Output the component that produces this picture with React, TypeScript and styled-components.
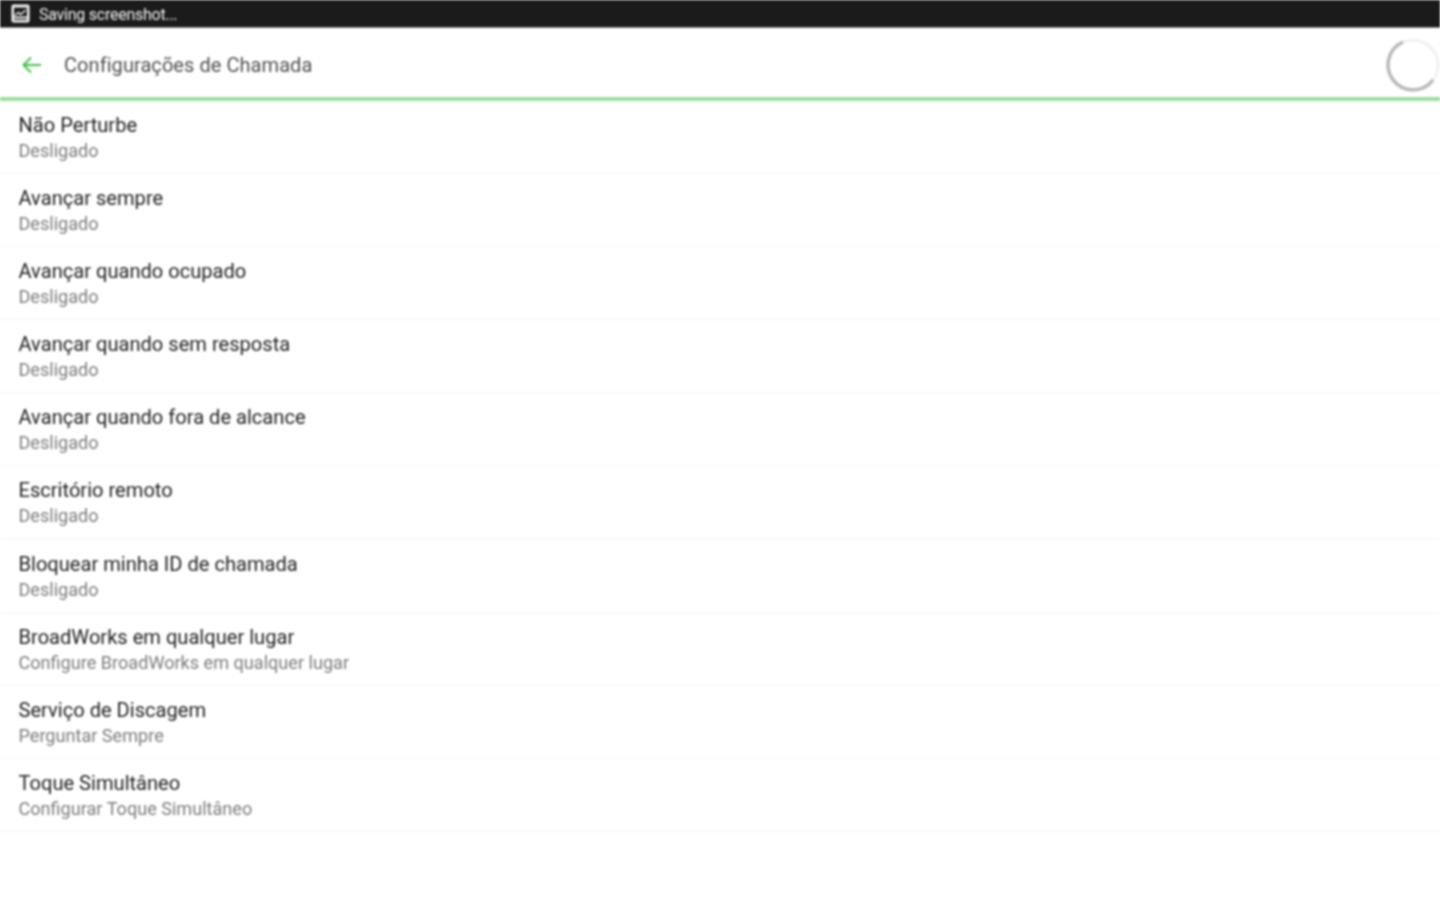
import React from 'react'
import styled, { createGlobalStyle } from 'styled-components'

const GlobalStyle = createGlobalStyle`
  html, body {
    margin: 0;
    padding: 0;
    background: #fff;
    font-family: Roboto, "Noto Sans", sans-serif;
  }
`

const Screen = styled.div`
  width: 1440px;
  height: 900px;
  overflow: hidden;
  background: #fff;
  filter: blur(0.8px);
`

const StatusBar = styled.div`
  height: 27px;
  background: #1b1b1b;
  display: flex;
  align-items: center;
  padding-left: 11px;
  gap: 9px;
  border-bottom: 1px solid #8a8a8a;
`

const StatusText = styled.span`
  color: #f4f4f4;
  font-size: 16px;
  letter-spacing: -0.25px;
  margin-top: 1px;
`

const Header = styled.header`
  height: 73px;
  box-sizing: border-box;
  display: flex;
  align-items: center;
  padding: 5px 0 0 20px;
  border-bottom: 4px solid #9bde9e;
  overflow: hidden;
`

const HeaderTitle = styled.h1`
  margin: 0 0 0 20px;
  flex: 1;
  font-size: 20px;
  font-weight: 400;
  letter-spacing: 0.06px;
  color: #505050;
`

const Spinner = styled.svg`
  width: 56px;
  height: 56px;
  margin: 0 -1px 0 0;
  flex: none;
`

const List = styled.ul`
  list-style: none;
  margin: 0;
  padding: 0;
`

const Row = styled.li`
  height: 73.1px;
  box-sizing: border-box;
  border-bottom: 1px solid #f3f3f3;
  padding: 12px 0 0 18.5px;
`

const RowTitle = styled.div`
  font-size: 20.1px;
  line-height: 24px;
  color: #1f1f1f;
`

const RowValue = styled.div`
  margin-top: 3px;
  font-size: 18.1px;
  line-height: 22px;
  color: #7c7c7c;
`

const rows = [
  ['Não Perturbe', 'Desligado'],
  ['Avançar sempre', 'Desligado'],
  ['Avançar quando ocupado', 'Desligado'],
  ['Avançar quando sem resposta', 'Desligado'],
  ['Avançar quando fora de alcance', 'Desligado'],
  ['Escritório remoto', 'Desligado'],
  ['Bloquear minha ID de chamada', 'Desligado'],
  ['BroadWorks em qualquer lugar', 'Configure BroadWorks em qualquer lugar'],
  ['Serviço de Discagem', 'Perguntar Sempre'],
  ['Toque Simultâneo', 'Configurar Toque Simultâneo'],
]

function App() {
  return (
    <>
      <GlobalStyle />
      <Screen>
        <StatusBar>
          <svg width="19" height="19" viewBox="0 0 19 19">
            <rect x="0.5" y="0.5" width="18" height="18" rx="2" fill="#f4f4f4" />
            <rect x="3" y="3.5" width="13" height="9" fill="#1b1b1b" />
            <path d="M3.5 11.5l4-3 2 2 5.5-4.5" stroke="#f4f4f4" strokeWidth="1.4" fill="none" />
            <rect x="3" y="14.5" width="13" height="1.4" fill="#1b1b1b" />
          </svg>
          <StatusText>Saving screenshot...</StatusText>
        </StatusBar>
        <Header>
          <svg width="24" height="24" viewBox="0 0 24 24" fill="none" stroke="#3fc24a" strokeWidth="2">
            <path d="M21 12H4M11 4.5L3.5 12l7.5 7.5" />
          </svg>
          <HeaderTitle>Configurações de Chamada</HeaderTitle>
          <Spinner viewBox="0 0 56 56" fill="none">
            <circle cx="28" cy="28" r="25" stroke="#f1f1f1" strokeWidth="3" />
            <path d="M18 5A25 25 0 1 0 48 43" stroke="#b8b8b8" strokeWidth="3.4" />
          </Spinner>
        </Header>
        <List>
          {rows.map(([title, value]) => (
            <Row key={title}>
              <RowTitle>{title}</RowTitle>
              <RowValue>{value}</RowValue>
            </Row>
          ))}
        </List>
      </Screen>
    </>
  )
}

export default App
